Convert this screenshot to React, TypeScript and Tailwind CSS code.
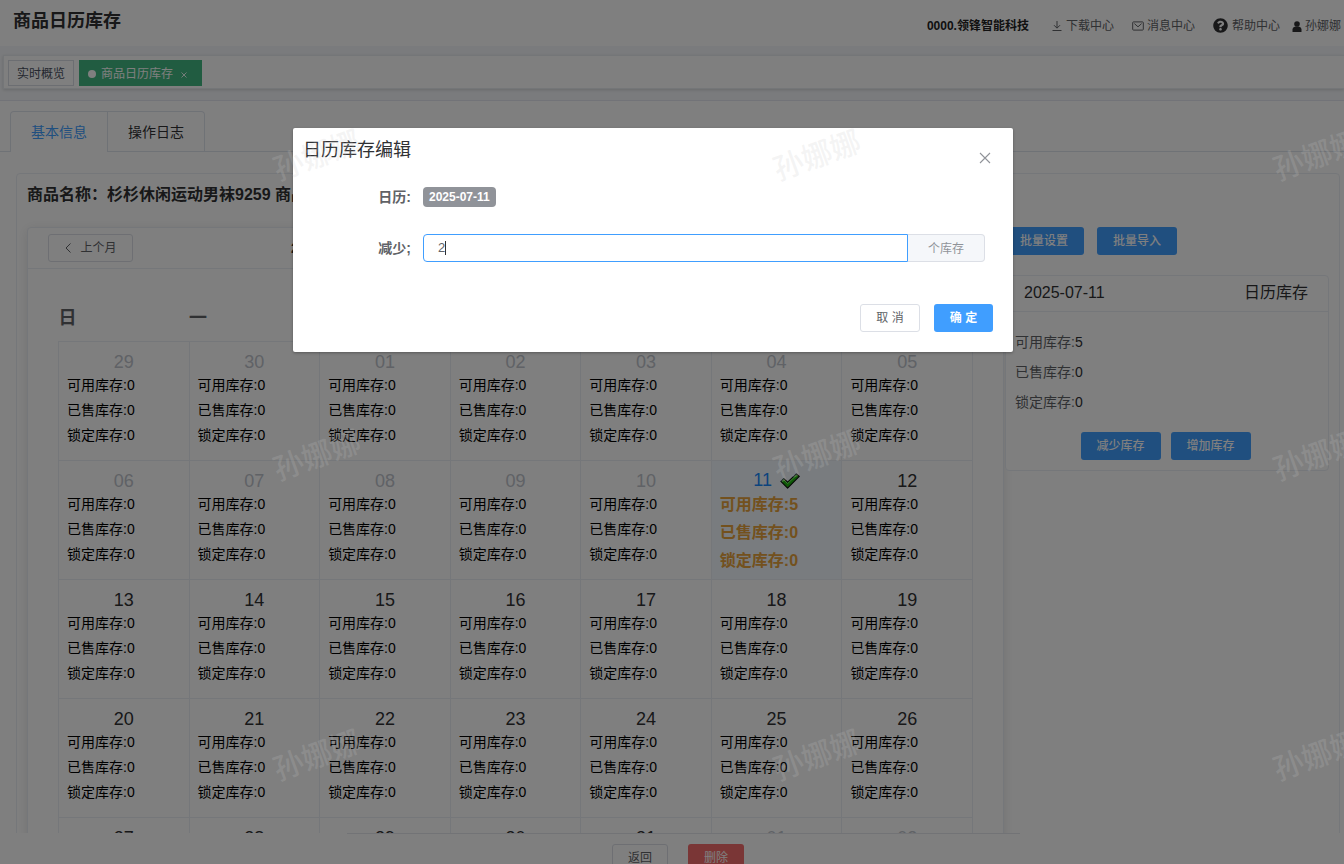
import React from "react";
import { FaQuestionCircle, FaUser } from "react-icons/fa";

type Day = { day: string; outside?: boolean; selected?: boolean; available?: number };

const muted = (days: string[]): Day[] => days.map((day) => ({ day, outside: true }));
const plain = (days: string[]): Day[] => days.map((day) => ({ day }));

const weeks: Day[][] = [
  muted(["29", "30", "01", "02", "03", "04", "05"]),
  [
    ...muted(["06", "07", "08", "09", "10"]),
    { day: "11", selected: true, available: 5 },
    { day: "12" },
  ],
  plain(["13", "14", "15", "16", "17", "18", "19"]),
  plain(["20", "21", "22", "23", "24", "25", "26"]),
  [...plain(["27", "28", "29", "30", "31"]), ...muted(["01", "02"])],
];

const weekdays = ["日", "一", "二", "三", "四", "五", "六"];

function DownloadIcon() {
  return (
    <svg viewBox="0 0 12 12" className="size-3" fill="none" stroke="currentColor" strokeWidth="1">
      <path d="M6 1v7M3 5.2 6 8.2l3-3M1.5 10.5h9" />
    </svg>
  );
}

function MailIcon() {
  return (
    <svg viewBox="0 0 12 12" className="size-3" fill="none" stroke="currentColor" strokeWidth="1">
      <rect x="0.7" y="1.9" width="10.6" height="8.2" rx="0.8" />
      <path d="M2.4 3.6 6 6.8l3.6-3.2" />
    </svg>
  );
}

function UserIcon() {
  return (
    <svg viewBox="0 0 10 11" className="h-[11px] w-2.5 text-[#303133]" fill="currentColor">
      <circle cx="5" cy="3" r="2.8" />
      <path d="M0.5 11V8.6C0.5 7 1.8 6 3.2 5.6h3.6C8.2 6 9.5 7 9.5 8.6V11z" />
    </svg>
  );
}

function CheckMark() {
  return (
    <svg viewBox="0 0 20 16" className="h-4 w-5" aria-hidden="true">
      <path
        d="M0.9 8.4 3.8 5.6l3.8 3.6L16.4 0.8 19.3 3.4 7.6 15.2z"
        fill="#1cb00e"
        stroke="#111"
        strokeWidth="1.1"
        strokeLinejoin="round"
      />
      <path d="M2.3 8.2 3.8 6.9l3.8 3.7L16.5 2.2" fill="none" stroke="#7af066" strokeWidth="1" />
    </svg>
  );
}

function DayCell({ day, outside, selected, available = 0 }: Day) {
  const tone = selected
    ? "leading-[21px] text-[#1989fa]"
    : outside
      ? "leading-[22px] text-[#c0c4cc]"
      : "leading-[22px] text-[#303133]";
  return (
    <td className={`h-[119px] border border-[#ebeef5] px-2 pt-[9px] align-top ${selected ? "bg-[#f2f8fe]" : ""}`}>
      <div className={`flex items-center justify-center gap-2 text-lg ${tone}`}>
        {day}
        {selected && <CheckMark />}
      </div>
      <div className={selected ? "text-base leading-7 font-bold text-[#e6a23c]" : "text-sm leading-[25px] text-black"}>
        <p>可用库存:{available}</p>
        <p>已售库存:0</p>
        <p>锁定库存:0</p>
      </div>
    </td>
  );
}

function PrimaryButton({ children }: { children: React.ReactNode }) {
  return (
    <button type="button" className="h-7 w-20 rounded-[3px] bg-[#409eff] text-xs font-medium text-white">
      {children}
    </button>
  );
}

function Header() {
  return (
    <header className="flex h-[46px] shrink-0 justify-between bg-white pr-[3px] pl-[13px]">
      <h1 className="pt-[9px] text-lg leading-6 font-bold text-[#303133]">商品日历库存</h1>
      <nav className="flex items-center pt-1.5 text-xs whitespace-nowrap text-[#606266]">
        <strong className="mr-[22px] text-[#222]">0000.领锋智能科技</strong>
        <a href="#download" className="mr-[18px] flex items-center gap-[3px]">
          <DownloadIcon />
          下载中心
        </a>
        <a href="#message" className="mr-[18px] flex items-center gap-[3px]">
          <MailIcon />
          消息中心
        </a>
        <a href="#help" className="mr-3 flex items-center gap-1">
          <FaQuestionCircle className="mb-0.5 size-[15px] text-[#303133]" />
          帮助中心
        </a>
        <a href="#user" className="flex items-center gap-[3px]">
          <UserIcon />
          孙娜娜
        </a>
      </nav>
    </header>
  );
}

function TagBar() {
  return (
    <div className="mt-[9px] ml-[3px] flex h-[34px] shrink-0 items-center gap-[5px] border border-r-0 border-[#e9ecf0] bg-white pt-0.5 pl-1 text-xs shadow-[0_1px_3px_rgba(0,0,0,0.15)]">
      <a href="#overview" className="flex h-[26px] items-center border border-[#d8dce5] px-2 pt-0.5 text-[#495060]">
        实时概览
      </a>
      <a href="#calendar" className="flex h-[26px] items-center bg-[#42b983] px-2 pt-0.5 text-white">
        <span className="mx-px mr-[5px] size-2 rounded-full bg-white" />
        商品日历库存
        <svg viewBox="0 0 8 8" className="mr-1.5 ml-[7px] mt-px size-2" stroke="currentColor" strokeWidth="0.9">
          <path d="M1.5 1.5l5 5M6.5 1.5l-5 5" />
        </svg>
      </a>
    </div>
  );
}

function Calendar() {
  return (
    <section className="min-w-0 flex-1 rounded border border-[#ebeef5] bg-white shadow-[0_2px_12px_rgba(0,0,0,0.1)]">
      <div className="flex h-[41px] items-center border-b border-[#ebeef5] pl-5">
        <button
          type="button"
          className="flex h-7 w-[85px] items-center justify-center gap-2 rounded-[3px] border border-[#dcdfe6] text-xs text-[#606266]"
        >
          <svg viewBox="0 0 8 12" className="h-3 w-2" fill="none" stroke="currentColor" strokeWidth="1">
            <path d="M6.5 1.5 2 6l4.5 4.5" />
          </svg>
          上个月
        </button>
        <strong className="ml-[158px] text-sm text-[#303133]">2025年07月</strong>
      </div>
      <div className="px-[30px] pt-[34px]">
        <table className="w-full table-fixed border-collapse">
          <thead>
            <tr>
              {weekdays.map((name) => (
                <th key={name} className="h-[38px] pb-2 text-left text-lg leading-[30px] font-bold text-[#606266]">
                  {name}
                </th>
              ))}
            </tr>
          </thead>
          <tbody>
            {weeks.map((week, i) => (
              <tr key={i}>
                {week.map((d) => (
                  <DayCell key={d.day} {...d} />
                ))}
              </tr>
            ))}
          </tbody>
        </table>
      </div>
    </section>
  );
}

function StockPanel() {
  return (
    <aside className="w-[325px] shrink-0">
      <div className="flex gap-[13px]">
        <PrimaryButton>批量设置</PrimaryButton>
        <PrimaryButton>批量导入</PrimaryButton>
      </div>
      <section className="mt-5 ml-px rounded border border-[#ebeef5] bg-white">
        <div className="flex h-9 items-center justify-between border-b border-[#ebeef5] pr-5 pb-0.5 pl-[18px] text-base text-[#303133]">
          <span>2025-07-11</span>
          <span>日历库存</span>
        </div>
        <div className="px-[9px] pt-[15px] text-sm leading-[30px] text-[#606266]">
          <p>可用库存:<span className="text-[#303133]">5</span></p>
          <p>已售库存:<span className="text-[#303133]">0</span></p>
          <p>锁定库存:<span className="text-[#303133]">0</span></p>
        </div>
        <div className="flex justify-center gap-2.5 pt-[15px] pr-[3px] pb-[10px]">
          <PrimaryButton>减少库存</PrimaryButton>
          <PrimaryButton>增加库存</PrimaryButton>
        </div>
      </section>
    </aside>
  );
}

function EditDialog() {
  return (
    <div role="dialog" aria-labelledby="dialog-title" className="w-[720px] rounded-xs bg-white shadow-[0_1px_3px_rgba(0,0,0,0.3)]">
      <div className="flex justify-between pr-[22px] pl-2.5">
        <h2 id="dialog-title" className="pt-2.5 text-lg leading-6 text-[#303133]">日历库存编辑</h2>
        <button type="button" aria-label="关闭" className="mt-[24px] size-3 text-[#909399]">
          <svg viewBox="0 0 12 12" fill="none" stroke="currentColor" strokeWidth="1.1">
            <path d="M1 1l10 10M11 1 1 11" />
          </svg>
        </button>
      </div>
      <form className="pt-[19px] pr-7 text-sm text-[#606266]" onSubmit={(e) => e.preventDefault()}>
        <div className="flex h-7 items-center">
          <span className="w-[118px] text-right font-bold">日历:</span>
          <span className="ml-3 flex h-5 items-center rounded bg-[#909399] px-1.5 text-xs font-bold text-white">2025-07-11</span>
        </div>
        <div className="mt-[23px] flex h-7 items-center">
          <label htmlFor="amount" className="w-[118px] text-right font-bold">减少;</label>
          <div className="relative ml-3 flex h-7 flex-1">
            <input
              id="amount"
              defaultValue="2"
              className="min-w-0 flex-1 rounded-l border border-[#409eff] px-[14px] text-[13px] text-[#606266] caret-transparent outline-none"
            />
            <span className="absolute top-[7px] left-[22px] h-[14px] w-px bg-[#303133]" />
            <span className="flex w-[77px] items-center justify-center rounded-r border border-l-0 border-[#dcdfe6] bg-[#f5f7fa] pt-0.5 text-xs text-[#909399]">
              个库存
            </span>
          </div>
        </div>
      </form>
      <div className="flex justify-end gap-[14px] pt-[42px] pr-5 pb-5 text-xs">
        <button type="button" className="h-7 w-[60px] rounded-[3px] border border-[#dcdfe6] text-[#606266]">取 消</button>
        <button type="button" className="h-7 w-[59px] rounded-[3px] bg-[#409eff] font-bold text-white">确 定</button>
      </div>
    </div>
  );
}

export default function App() {
  return (
    <div className="relative flex h-screen flex-col overflow-hidden bg-[#f5f7fa] font-['Liberation_Sans','Noto_Sans_CJK_SC',sans-serif]">
      <Header />
      <TagBar />
      <main className="mt-[11px] flex min-h-0 flex-1 flex-col overflow-hidden border-t border-[#e4e7f0] bg-white">
        <div role="tablist" className="mt-2.5 flex h-[41px] shrink-0 border-b border-[#dfe4ed] pl-2.5 text-sm">
          <button
            type="button"
            role="tab"
            aria-selected="true"
            className="-mb-px w-[98px] rounded-tl border border-b-0 border-[#dfe4ed] bg-white text-[#409eff]"
          >
            基本信息
          </button>
          <button type="button" role="tab" aria-selected="false" className="w-[97px] rounded-tr border-t border-r border-[#dfe4ed] text-[#303133]">
            操作日志
          </button>
        </div>
        <section className="mt-[21px] mr-1 ml-4 flex-1 rounded border border-[#ebeef5] px-2.5">
          <h2 className="pt-[9px] text-base leading-6 font-bold whitespace-nowrap text-[#303133]">
            商品名称：杉杉休闲运动男袜9259 商品编码：9259
          </h2>
          <div className="mt-5 flex items-start">
            <Calendar />
            <StockPanel />
          </div>
        </section>
      </main>
      <footer className="flex h-[31px] shrink-0 flex-col bg-white">
        <div className="mr-[324px] ml-[347px] h-0 border-t border-[#e4e7ed]" />
        <div className="flex justify-center gap-5 pt-2.5 pl-3 text-xs">
          <button type="button" className="h-7 w-14 shrink-0 rounded-[3px] border border-[#dcdfe6] text-[#606266]">返回</button>
          <button type="button" className="h-7 w-14 shrink-0 rounded-[3px] bg-[#f56c6c] text-white">删除</button>
        </div>
      </footer>

      <div className="absolute inset-0 flex items-start justify-center bg-black/50 pt-32 pr-[38px]">
        <EditDialog />
      </div>

      <div aria-hidden="true" className="pointer-events-none absolute top-[5px] left-[67px] grid grid-cols-[500px_500px_500px] text-[30px] font-medium text-[#c8c8c8]/20">
        {Array.from({ length: 9 }, (_, i) => (
          <span key={i} className="flex h-[300px] items-center justify-center">
            <span className="-rotate-20">孙娜娜</span>
          </span>
        ))}
      </div>
    </div>
  );
}
